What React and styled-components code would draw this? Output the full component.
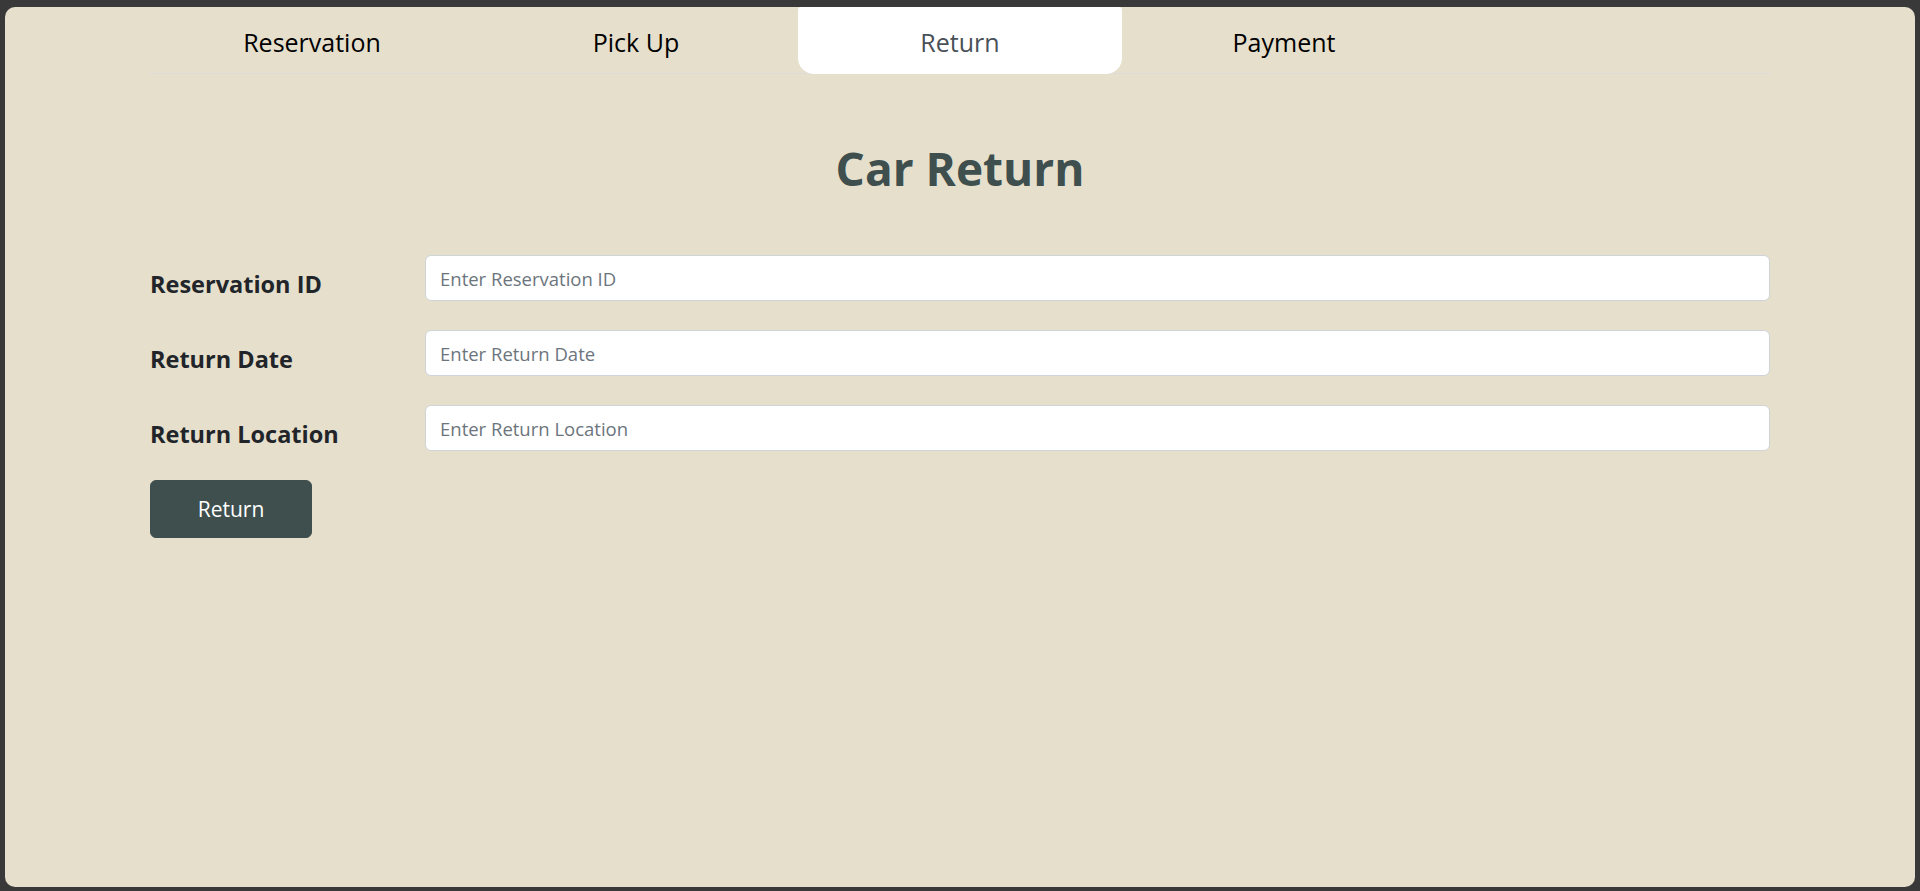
import React from "react";
import styled, { createGlobalStyle } from "styled-components";

const GlobalStyle = createGlobalStyle`
  html, body {
    margin: 0;
    padding: 0;
    height: 100%;
  }
  body {
    background: #393939;
    font-family: "Open Sans", "Noto Sans", "Liberation Sans", sans-serif;
    padding: 7px 5px 4px;
    box-sizing: border-box;
  }
  #root {
    height: 100%;
  }
  * {
    box-sizing: border-box;
  }
`;

const Card = styled.div`
  height: 100%;
  background: #e5dfcc;
  border-radius: 10px;
  padding: 0 145px;
  display: flex;
  flex-direction: column;
`;

const Nav = styled.nav`
  display: grid;
  grid-template-columns: repeat(5, 1fr);
  height: 67px;
  border-bottom: 1px solid #dcdcdc;
`;

const Tab = styled.a`
  display: flex;
  align-items: center;
  justify-content: center;
  padding-top: 2px;
  font-size: 25px;
  color: ${(p) => (p.$active ? "#495057" : "#000")};
  background: ${(p) => (p.$active ? "#fff" : "transparent")};
  border-radius: 3px 3px 16px 16px;
  margin-bottom: -1px;
  text-decoration: none;
  cursor: pointer;
`;

const Title = styled.h1`
  margin: 67px 0 59px;
  text-align: center;
  font-size: 46px;
  line-height: 1.2;
  font-weight: 700;
  color: #3e4f4e;
`;

const Form = styled.form`
  display: flex;
  flex-direction: column;
  gap: 29px;
`;

const Row = styled.div`
  display: grid;
  grid-template-columns: 275px 1fr;
  align-items: start;
`;

const Label = styled.label`
  padding-top: 15px;
  font-size: 23.5px;
  line-height: 1.2;
  font-weight: 700;
  color: #212529;
`;

const Input = styled.input`
  height: 46px;
  width: 100%;
  padding: 0 14px;
  font-family: inherit;
  font-size: 18.5px;
  color: #212529;
  background: #fff;
  border: 1px solid #ced4da;
  border-radius: 6px;
  outline: none;
  &::placeholder {
    color: #6c757d;
  }
`;

const Button = styled.button`
  width: 162px;
  height: 58px;
  font-family: inherit;
  font-size: 21px;
  color: #fff;
  background: #3e4f4e;
  border: 1px solid #3e4f4e;
  border-radius: 6px;
  cursor: pointer;
`;

const tabs = ["Reservation", "Pick Up", "Return", "Payment"];

const fields = [
  { id: "reservationId", label: "Reservation ID", placeholder: "Enter Reservation ID" },
  { id: "returnDate", label: "Return Date", placeholder: "Enter Return Date" },
  { id: "returnLocation", label: "Return Location", placeholder: "Enter Return Location" },
];

export default function App() {
  return (
    <>
      <GlobalStyle />
      <Card>
        <Nav>
          {tabs.map((t) => (
            <Tab key={t} $active={t === "Return"}>
              {t}
            </Tab>
          ))}
        </Nav>
        <Title>Car Return</Title>
        <Form onSubmit={(e) => e.preventDefault()}>
          {fields.map((f) => (
            <Row key={f.id}>
              <Label htmlFor={f.id}>{f.label}</Label>
              <Input id={f.id} type="text" placeholder={f.placeholder} />
            </Row>
          ))}
          <div>
            <Button type="submit">Return</Button>
          </div>
        </Form>
      </Card>
    </>
  );
}
